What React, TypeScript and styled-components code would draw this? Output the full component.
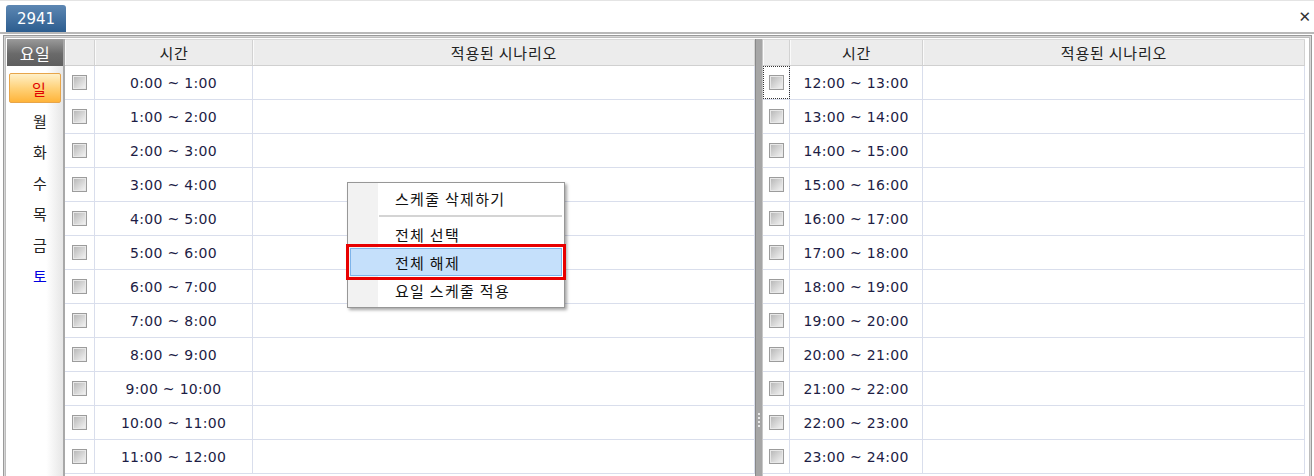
import React from 'react';
import styled, { createGlobalStyle } from 'styled-components';

const GlobalStyle = createGlobalStyle`
  html, body {
    margin: 0;
    padding: 0;
    background: #ffffff;
    font-family: 'DejaVu Sans', 'Noto Sans CJK KR', sans-serif;
  }
`;

const StyledPage = styled.div`
  position: relative;
  width: 1314px;
  height: 476px;
  overflow: hidden;
  background: #fff;
  border-top: 1px solid #e4e4e4;
  box-sizing: border-box;
`;

const StyledTabBar = styled.div`
  display: flex;
  align-items: flex-end;
  justify-content: space-between;
  height: 31px;
  padding: 0 6px;
  border-bottom: 2px solid #b8b8b8;
`;

const StyledTab = styled.div`
  width: 60px;
  height: 27px;
  display: flex;
  align-items: center;
  justify-content: center;
  border-radius: 3px 3px 0 0;
  background: linear-gradient(#5d87b3, #2c5d8f);
  color: #fff;
  font-size: 15px;
`;

const StyledClose = styled.div`
  align-self: center;
  margin-right: -3px;
  font-size: 15px;
  font-weight: bold;
  color: #333;
`;

const StyledFrame = styled.div`
  display: flex;
  height: 440px;
  margin: 1px 2px 0 3px;
  border: 1px solid #9a9a9a;
  border-bottom: none;
  padding: 3px 1px 0 3px;
  box-shadow: inset 0 0 0 1px #d6d6d6, inset 0 0 0 2px #bdbdbd;
`;

const StyledDays = styled.div`
  width: 56px;
  flex: none;
  display: flex;
  flex-direction: column;
  align-items: center;
  background: linear-gradient(90deg, #ffffff 70%, #e6e6e6);
  border-right: 2px solid #a8a8a8;
`;

const StyledDaysHeader = styled.div`
  width: 56px;
  height: 27px;
  display: flex;
  align-items: center;
  justify-content: center;
  background: linear-gradient(#9a9a9a, #6a6a6a 55%, #5e5e5e);
  color: #fff;
  font-family: 'Noto Sans CJK KR', sans-serif;
  font-size: 16px;
  letter-spacing: 0.5px;
  margin-bottom: 7px;
`;

const StyledDay = styled.div<{ active?: boolean; color?: string }>`
  width: ${({ active }) => (active ? '52px' : '56px')};
  height: ${({ active }) => (active ? '30px' : '31px')};
  box-sizing: border-box;
  display: flex;
  align-items: center;
  justify-content: center;
  padding-left: ${({ active }) => (active ? '8px' : '10px')};
  font-family: 'Noto Sans CJK KR', sans-serif;
  font-size: 15px;
  color: ${({ color }) => color || '#222'};
  border-radius: 2px;
  border: ${({ active }) => (active ? '1px solid #e7a54a' : 'none')};
  background: ${({ active }) =>
    active ? 'linear-gradient(#fff0c8, #ffd27a 50%, #ffb43a)' : 'transparent'};
  margin-bottom: ${({ active }) => (active ? '2px' : '0')};
`;

const StyledGrid = styled.div<{ width: number }>`
  width: ${({ width }) => width}px;
  flex: none;
  display: flex;
  flex-direction: column;
`;

const StyledHeaderRow = styled.div<{ cols: string }>`
  display: grid;
  grid-template-columns: ${({ cols }) => cols};
  height: 27px;
  background: #ececec;
  border-top: 1px solid #d8d8d8;
  border-bottom: 1px solid #d0d0d0;
  box-sizing: border-box;
`;

const StyledHeaderCell = styled.div`
  display: flex;
  align-items: center;
  justify-content: center;
  font-family: 'Noto Sans CJK KR', sans-serif;
  font-size: 15px;
  letter-spacing: 0.8px;
  color: #222;
  border-right: 1px solid #d2d2d2;
  border-left: 1px solid #fafafa;
`;

const StyledRow = styled.div<{ cols: string }>`
  display: grid;
  grid-template-columns: ${({ cols }) => cols};
  height: 34px;
  border-bottom: 1px solid #d9deec;
  box-sizing: border-box;
`;

const StyledCell = styled.div<{ focused?: boolean }>`
  display: flex;
  align-items: center;
  justify-content: center;
  border-right: 1px solid #d9deec;
  font-size: 14px;
  letter-spacing: 0.3px;
  color: #1d1d45;
  outline: ${({ focused }) => (focused ? '1px dotted #333' : 'none')};
  outline-offset: -1px;
`;

const StyledCheck = styled.span`
  width: 13px;
  height: 13px;
  margin-top: -1px;
  border: 1px solid #9c9c9c;
  box-shadow: inset 0 0 0 1px #e8e8e8;
  background: linear-gradient(135deg, #b4b4b4, #f6f6f6);
`;

const StyledSplitter = styled.div`
  width: 8px;
  flex: none;
  background: #a6a6a6;
  border-left: 1px solid #888;
  border-right: 1px solid #c8c8c8;
  box-sizing: border-box;
  display: flex;
  flex-direction: column;
  align-items: center;
  justify-content: flex-end;
  padding-bottom: 52px;
`;

const StyledGrip = styled.span`
  width: 2px;
  height: 2px;
  margin-top: 2px;
  background: #e8e8e8;
`;

const StyledMenu = styled.div`
  position: absolute;
  left: 347px;
  top: 181px;
  width: 218px;
  padding: 1px 0 3px;
  background: linear-gradient(90deg, #f2f2f2 30px, #ffffff 30px);
  border: 1px solid #979797;
  box-shadow: 2px 2px 3px rgba(0, 0, 0, 0.35);
  box-sizing: border-box;
  font-family: 'Noto Sans CJK KR', sans-serif;
`;

const StyledMenuItem = styled.div<{ selected?: boolean }>`
  height: 28px;
  margin: 0 2px;
  padding-left: 44px;
  display: flex;
  align-items: center;
  font-size: 15px;
  letter-spacing: 1.3px;
  color: #111;
  box-sizing: border-box;
  background: ${({ selected }) => (selected ? '#c5e0fb' : 'transparent')};
  border: 1px solid ${({ selected }) => (selected ? '#7eb4ea' : 'transparent')};
  outline: ${({ selected }) => (selected ? '3px solid #e80000' : 'none')};
  outline-offset: 1px;
`;

const StyledMenuSep = styled.div`
  height: 2px;
  margin: 3px 2px 3px 31px;
  background: #d4d4d4;
`;

const DAYS = [
  { label: '일', color: '#e00000', active: true },
  { label: '월' },
  { label: '화' },
  { label: '수' },
  { label: '목' },
  { label: '금' },
  { label: '토', color: '#0000e0' },
];

const leftRows = Array.from({ length: 12 }, (_, i) => `${i}:00 ~ ${i + 1}:00`);
const rightRows = Array.from(
  { length: 12 },
  (_, i) => `${i + 12}:00 ~ ${i + 13}:00`,
);

type GridProps = {
  width: number;
  cols: string;
  rows: string[];
  focusFirst?: boolean;
};

const ScheduleGrid: React.FC<GridProps> = ({ width, cols, rows, focusFirst }) => (
  <StyledGrid width={width}>
    <StyledHeaderRow cols={cols}>
      <StyledHeaderCell />
      <StyledHeaderCell>시간</StyledHeaderCell>
      <StyledHeaderCell>적용된 시나리오</StyledHeaderCell>
    </StyledHeaderRow>
    {rows.map((time, i) => (
      <StyledRow cols={cols} key={time}>
        <StyledCell focused={focusFirst && i === 0}>
          <StyledCheck />
        </StyledCell>
        <StyledCell>{time}</StyledCell>
        <StyledCell />
      </StyledRow>
    ))}
  </StyledGrid>
);

export default function App() {
  return (
    <StyledPage>
      <GlobalStyle />
      <StyledTabBar>
        <StyledTab>2941</StyledTab>
        <StyledClose>✕</StyledClose>
      </StyledTabBar>
      <StyledFrame>
        <StyledDays>
          <StyledDaysHeader>요일</StyledDaysHeader>
          {DAYS.map((d) => (
            <StyledDay key={d.label} active={d.active} color={d.color}>
              {d.label}
            </StyledDay>
          ))}
        </StyledDays>
        <ScheduleGrid width={690} cols="30px 158px 1fr" rows={leftRows} />
        <StyledSplitter>
          {[0, 1, 2, 3].map((n) => (
            <StyledGrip key={n} />
          ))}
        </StyledSplitter>
        <ScheduleGrid
          width={542}
          cols="27px 133px 1fr"
          rows={rightRows}
          focusFirst
        />
      </StyledFrame>
      <StyledMenu>
        <StyledMenuItem>스케줄 삭제하기</StyledMenuItem>
        <StyledMenuSep />
        <StyledMenuItem>전체 선택</StyledMenuItem>
        <StyledMenuItem selected>전체 해제</StyledMenuItem>
        <StyledMenuItem>요일 스케줄 적용</StyledMenuItem>
      </StyledMenu>
    </StyledPage>
  );
}
